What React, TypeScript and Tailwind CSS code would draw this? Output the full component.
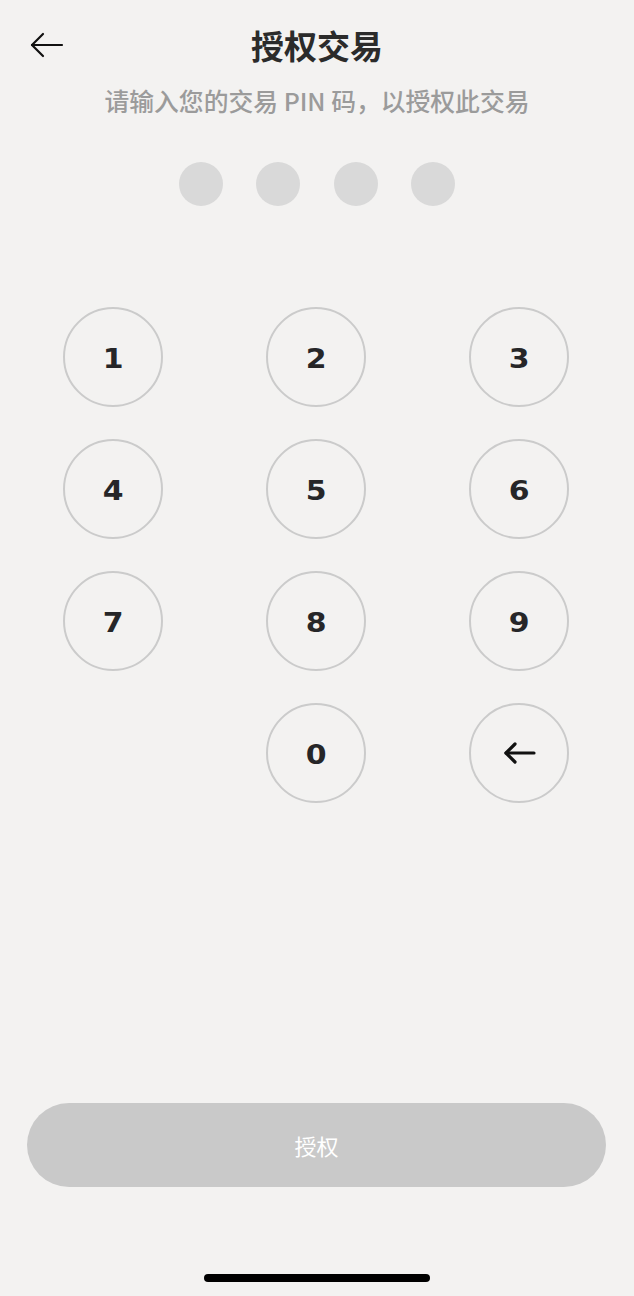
import React from "react";

const cjk = { fontFamily: '"Noto Sans CJK SC", "Noto Sans", sans-serif' };
const digitFont = { fontFamily: '"DejaVu Sans", "Liberation Sans", sans-serif' };

function Key({ children }: { children: React.ReactNode }) {
  return (
    <button className="w-[100px] h-[100px] rounded-full border-2 border-[#cbcbcb] flex items-center justify-center text-[#262628] text-[26px] font-bold">
      {children}
    </button>
  );
}

export default function App() {
  const keys = ["1", "2", "3", "4", "5", "6", "7", "8", "9"];
  return (
    <div className="w-[634px] h-[1296px] bg-[#f3f2f1] flex flex-col" style={cjk}>
      <div className="grid grid-cols-[1fr_auto_1fr] items-center pt-[25px] px-[30px]">
        <div className="flex items-center">
          <svg width="34" height="26" viewBox="0 0 34 26" fill="none" stroke="#111" strokeWidth="2.2" strokeLinecap="round" strokeLinejoin="round">
            <path d="M32 13H2" />
            <path d="M13 2L2 13l11 11" />
          </svg>
        </div>
        <h1 className="text-[33px] leading-[40px] font-bold text-[#2b2b2b]">授权交易</h1>
        <div />
      </div>
      <p className="mt-[19px] text-center text-[24.8px] leading-[32px] font-medium text-[#9b9b9b]">
        请输入您的交易 PIN 码，以授权此交易
      </p>
      <div className="mt-[46px] flex justify-center gap-[33.5px]">
        {[0, 1, 2, 3].map((i) => (
          <div key={i} className="w-[44px] h-[44px] rounded-full bg-[#d9d9d9]" />
        ))}
      </div>
      <div className="mt-[101px] ml-[63px] grid grid-cols-[100px_100px_100px] gap-x-[103px] gap-y-[32px]" style={digitFont}>
        {keys.map((k) => (
          <Key key={k}>
            <span className="inline-block scale-x-115 translate-y-[2px]">{k}</span>
          </Key>
        ))}
        <div />
        <Key>
          <span className="inline-block scale-x-115 translate-y-[2px]">0</span>
        </Key>
        <Key>
          <svg width="34" height="26" viewBox="0 0 34 26" fill="none" stroke="#111" strokeWidth="3.2" strokeLinecap="round" strokeLinejoin="round">
            <path d="M32 13H4" />
            <path d="M13 4l-9 9 9 9" />
          </svg>
        </Key>
      </div>
      <div className="flex-1" />
      <div className="px-[27px]">
        <button className="w-[579px] h-[84px] rounded-[42px] bg-[#c9c9c9] text-white text-[22px] leading-none flex items-center justify-center" style={cjk}>
          授权
        </button>
      </div>
      <div className="mt-[87px] mb-[14px] mx-auto w-[226px] h-[8px] rounded-full bg-black" />
    </div>
  );
}
